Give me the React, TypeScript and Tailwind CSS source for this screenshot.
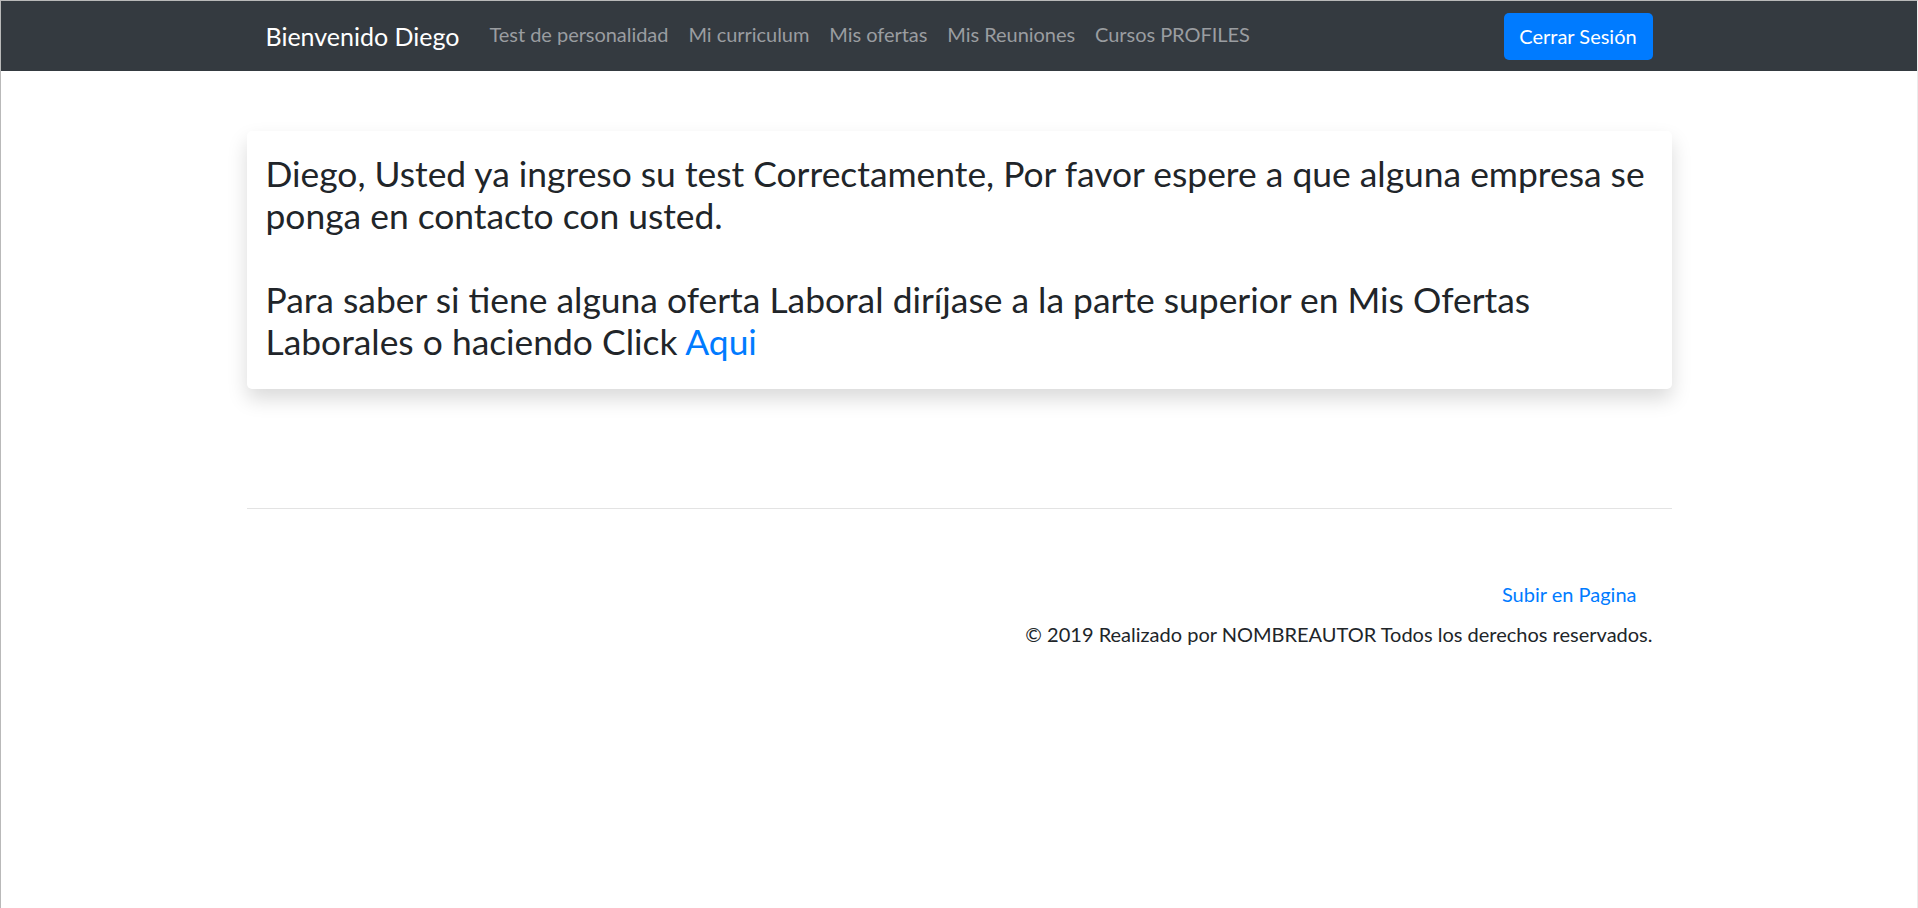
import React from "react";

const links = ["Test de personalidad", "Mi curriculum", "Mis ofertas", "Mis Reuniones", "Cursos PROFILES"];

export default function App() {
  return (
    <div className="min-h-[908px] bg-white border-t border-l border-r border-t-[#b9b9b9] border-l-[#b9b9b9] border-r-[#ececec] font-['Lato',sans-serif] text-[#212529]">
      {/* Navbar */}
      <nav className="h-[70px] bg-[#343a40]">
        <div className="w-[1425px] mx-auto h-full px-[19px] flex items-center">
          <a href="#" className="text-white text-[25px] mr-[20px] leading-none">
            Bienvenido Diego
          </a>
          <ul className="flex items-center">
            {links.map((l) => (
              <li key={l}>
                <a href="#" className="px-[10px] text-[20px] text-[#9a9da0] leading-none tracking-[-0.04px]">
                  {l}
                </a>
              </li>
            ))}
          </ul>
          <button className="ml-auto w-[149px] h-[47px] rounded-[5px] bg-[#007bff] text-white text-[20px]">
            Cerrar Sesión
          </button>
        </div>
      </nav>

      {/* Mensaje */}
      <div className="w-[1425px] mx-auto mt-[60px] bg-white rounded-[5px] shadow-[0_10px_20px_rgba(0,0,0,0.15)] px-[19px] pt-[22px] pb-[26px]">
        <h3 className="text-[35.4px] leading-[42px] whitespace-nowrap">
          Diego, Usted ya ingreso su test Correctamente, Por favor espere a que alguna empresa se
          <br />
          ponga en contacto con usted.
          <br />
          <br />
          Para saber si tiene alguna oferta Laboral diríjase a la parte superior en Mis Ofertas
          <br />
          Laborales o haciendo Click{" "}
          <a href="#" className="text-[#007bff]">
            Aqui
          </a>
        </h3>
      </div>

      {/* Footer */}
      <footer className="w-[1425px] mx-auto mt-[119px]">
        <hr className="border-0 border-t border-[#e3e3e3]" />
        <div className="px-[19px] pt-[70px] flex flex-col items-end">
          <a href="#" className="text-[#007bff] text-[20px] leading-[30px] mr-[16px]">
            Subir en Pagina
          </a>
          <p className="text-[20px] leading-[30px] mt-[10px]">
            © 2019 Realizado por NOMBREAUTOR Todos los derechos reservados.
          </p>
        </div>
      </footer>
    </div>
  );
}
